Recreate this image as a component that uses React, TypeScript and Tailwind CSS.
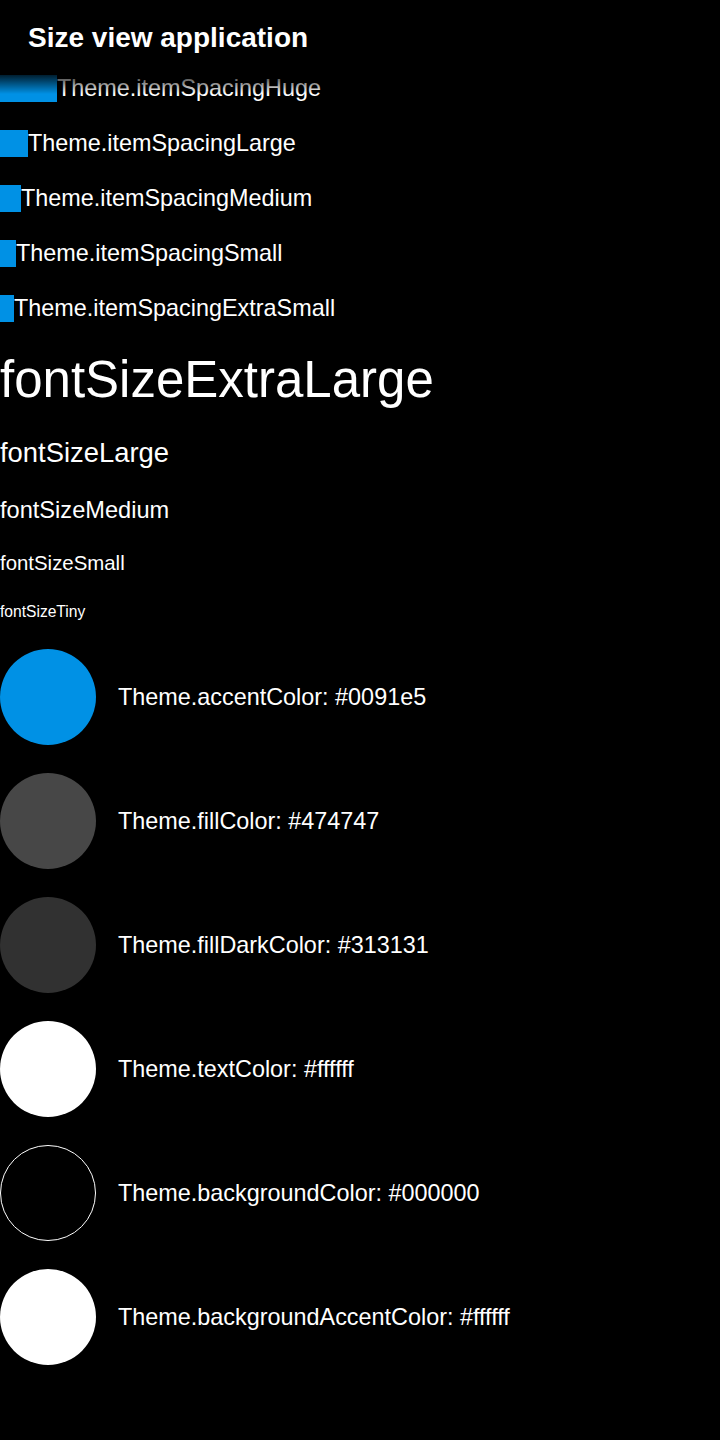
export default function App() {
  const font = { fontFamily: '"Liberation Sans", Arial, sans-serif' };
  const spacings = [
    { name: "Theme.itemSpacingHuge", w: "w-[57px]" },
    { name: "Theme.itemSpacingLarge", w: "w-[28px]" },
    { name: "Theme.itemSpacingMedium", w: "w-[21px]" },
    { name: "Theme.itemSpacingSmall", w: "w-[16px]" },
    { name: "Theme.itemSpacingExtraSmall", w: "w-[14px]" },
  ];
  const colors = [
    { name: "Theme.accentColor: #0091e5", cls: "bg-[#0091e5]" },
    { name: "Theme.fillColor: #474747", cls: "bg-[#474747]" },
    { name: "Theme.fillDarkColor: #313131", cls: "bg-[#313131]" },
    { name: "Theme.textColor: #ffffff", cls: "bg-white" },
    { name: "Theme.backgroundColor: #000000", cls: "bg-black border border-white" },
    { name: "Theme.backgroundAccentColor: #ffffff", cls: "bg-white" },
  ];
  return (
    <div className="min-h-[1440px] w-[720px] bg-black text-white" style={font}>
      <div className="relative h-[75px] pl-[28px] pt-[22px]">
        <h1 className="text-[28px] font-bold leading-[32px]">Size view application</h1>
        <div className="pointer-events-none absolute left-0 right-0 top-[70px] z-10 h-[24px] bg-gradient-to-b from-black to-transparent" />
      </div>
      <div className="flex flex-col gap-[28px]">
        {spacings.map((s) => (
          <div key={s.name} className="flex items-center">
            <div className={`${s.w} h-[27px] bg-[#0091e5]`} />
            <span className="text-[23.4px] leading-[27px]">{s.name}</span>
          </div>
        ))}
        <div className="text-[51px] leading-[normal]">fontSizeExtraLarge</div>
        <div className="text-[27.4px] leading-[normal]">fontSizeLarge</div>
        <div className="text-[23.6px] leading-[normal]">fontSizeMedium</div>
        <div className="text-[20.4px] leading-[normal]">fontSizeSmall</div>
        <div className="text-[15.6px] leading-[normal]">fontSizeTiny</div>
        {colors.map((c) => (
          <div key={c.name} className="flex items-center gap-[22px]">
            <div className={`h-[96px] w-[96px] shrink-0 rounded-full ${c.cls}`} />
            <span className="text-[23.4px] leading-[normal]">{c.name}</span>
          </div>
        ))}
      </div>
    </div>
  );
}
